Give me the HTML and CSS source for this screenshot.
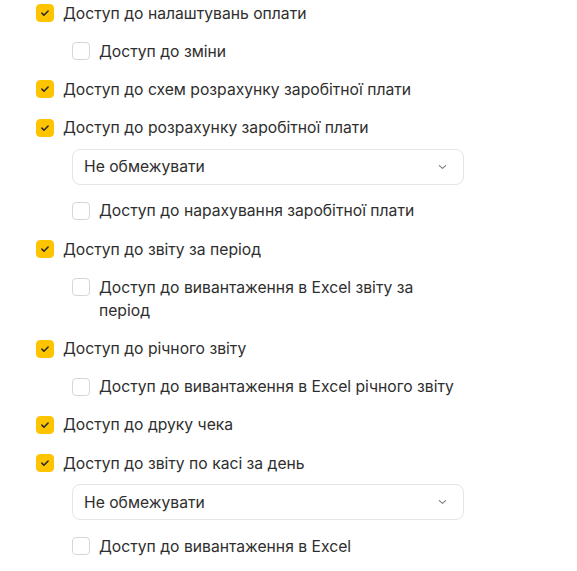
FILE: index.html
```html
<!DOCTYPE html>
<html lang="uk">
<head>
<meta charset="utf-8">
<link rel="stylesheet" href="styles.css">
</head>
<body>
<div class="list">
  <label class="row"><span class="box on"><svg viewBox="0 0 18 18"><path d="M5.5 9.2l2.3 2.3 4.7-4.7"/></svg></span><span class="txt">Доступ до налаштувань оплати</span></label>
  <label class="row sub"><span class="box"></span><span class="txt">Доступ до зміни</span></label>
  <label class="row"><span class="box on"><svg viewBox="0 0 18 18"><path d="M5.5 9.2l2.3 2.3 4.7-4.7"/></svg></span><span class="txt">Доступ до схем розрахунку заробітної плати</span></label>
  <label class="row"><span class="box on"><svg viewBox="0 0 18 18"><path d="M5.5 9.2l2.3 2.3 4.7-4.7"/></svg></span><span class="txt">Доступ до розрахунку заробітної плати</span></label>
  <div class="select sub"><span>Не обмежувати</span><svg class="chev" viewBox="0 0 10 6"><path d="M1.5 1.5l3.5 3 3.5-3"/></svg></div>
  <label class="row sub"><span class="box"></span><span class="txt">Доступ до нарахування заробітної плати</span></label>
  <label class="row"><span class="box on"><svg viewBox="0 0 18 18"><path d="M5.5 9.2l2.3 2.3 4.7-4.7"/></svg></span><span class="txt">Доступ до звіту за період</span></label>
  <label class="row sub"><span class="box"></span><span class="txt">Доступ до вивантаження в Excel звіту за період</span></label>
  <label class="row"><span class="box on"><svg viewBox="0 0 18 18"><path d="M5.5 9.2l2.3 2.3 4.7-4.7"/></svg></span><span class="txt">Доступ до річного звіту</span></label>
  <label class="row sub"><span class="box"></span><span class="txt">Доступ до вивантаження в Excel річного звіту</span></label>
  <label class="row"><span class="box on"><svg viewBox="0 0 18 18"><path d="M5.5 9.2l2.3 2.3 4.7-4.7"/></svg></span><span class="txt">Доступ до друку чека</span></label>
  <label class="row"><span class="box on"><svg viewBox="0 0 18 18"><path d="M5.5 9.2l2.3 2.3 4.7-4.7"/></svg></span><span class="txt">Доступ до звіту по касі за день</span></label>
  <div class="select sub"><span>Не обмежувати</span><svg class="chev" viewBox="0 0 10 6"><path d="M1.5 1.5l3.5 3 3.5-3"/></svg></div>
  <label class="row sub"><span class="box"></span><span class="txt">Доступ до вивантаження в Excel</span></label>
</div>
</body>
</html>
```
FILE: styles.css
```css
* { box-sizing: border-box; }
html, body { margin: 0; background: #fff; }
body {
  font-family: Inter, "Noto Sans", sans-serif;
  font-size: 15.7px;
  color: #2e2e2e;
  padding: 1.5px 0 0 36px;
}
.list {
  width: 428px;
  display: flex;
  flex-direction: column;
  gap: 15.2px;
}
.row {
  display: flex;
  align-items: flex-start;
  gap: 9px;
  line-height: 23px;
}
.sub { margin-left: 36px; }
.box {
  flex: none;
  width: 18px;
  height: 18px;
  margin-top: 2.5px;
  border-radius: 4px;
  border: 1px solid #d3d6dc;
  background: #fff;
  display: flex;
}
.box.on {
  background: #ffc400;
  border-color: #ffc400;
}
.box svg { width: 100%; height: 100%; }
.box path {
  fill: none;
  stroke: #2b2b2b;
  stroke-width: 1.8;
  stroke-linecap: round;
  stroke-linejoin: round;
}
.select {
  height: 36px;
  margin-top: -5.5px;
  margin-bottom: -0.5px;
  border: 1px solid #e3e5e8;
  border-radius: 8px;
  display: flex;
  align-items: center;
  justify-content: space-between;
  padding: 0 16px 0 11px;
}
.chev { width: 9px; height: 6px; }
.chev path {
  fill: none;
  stroke: #7a7f87;
  stroke-width: 1.3;
  stroke-linecap: round;
  stroke-linejoin: round;
}
```
